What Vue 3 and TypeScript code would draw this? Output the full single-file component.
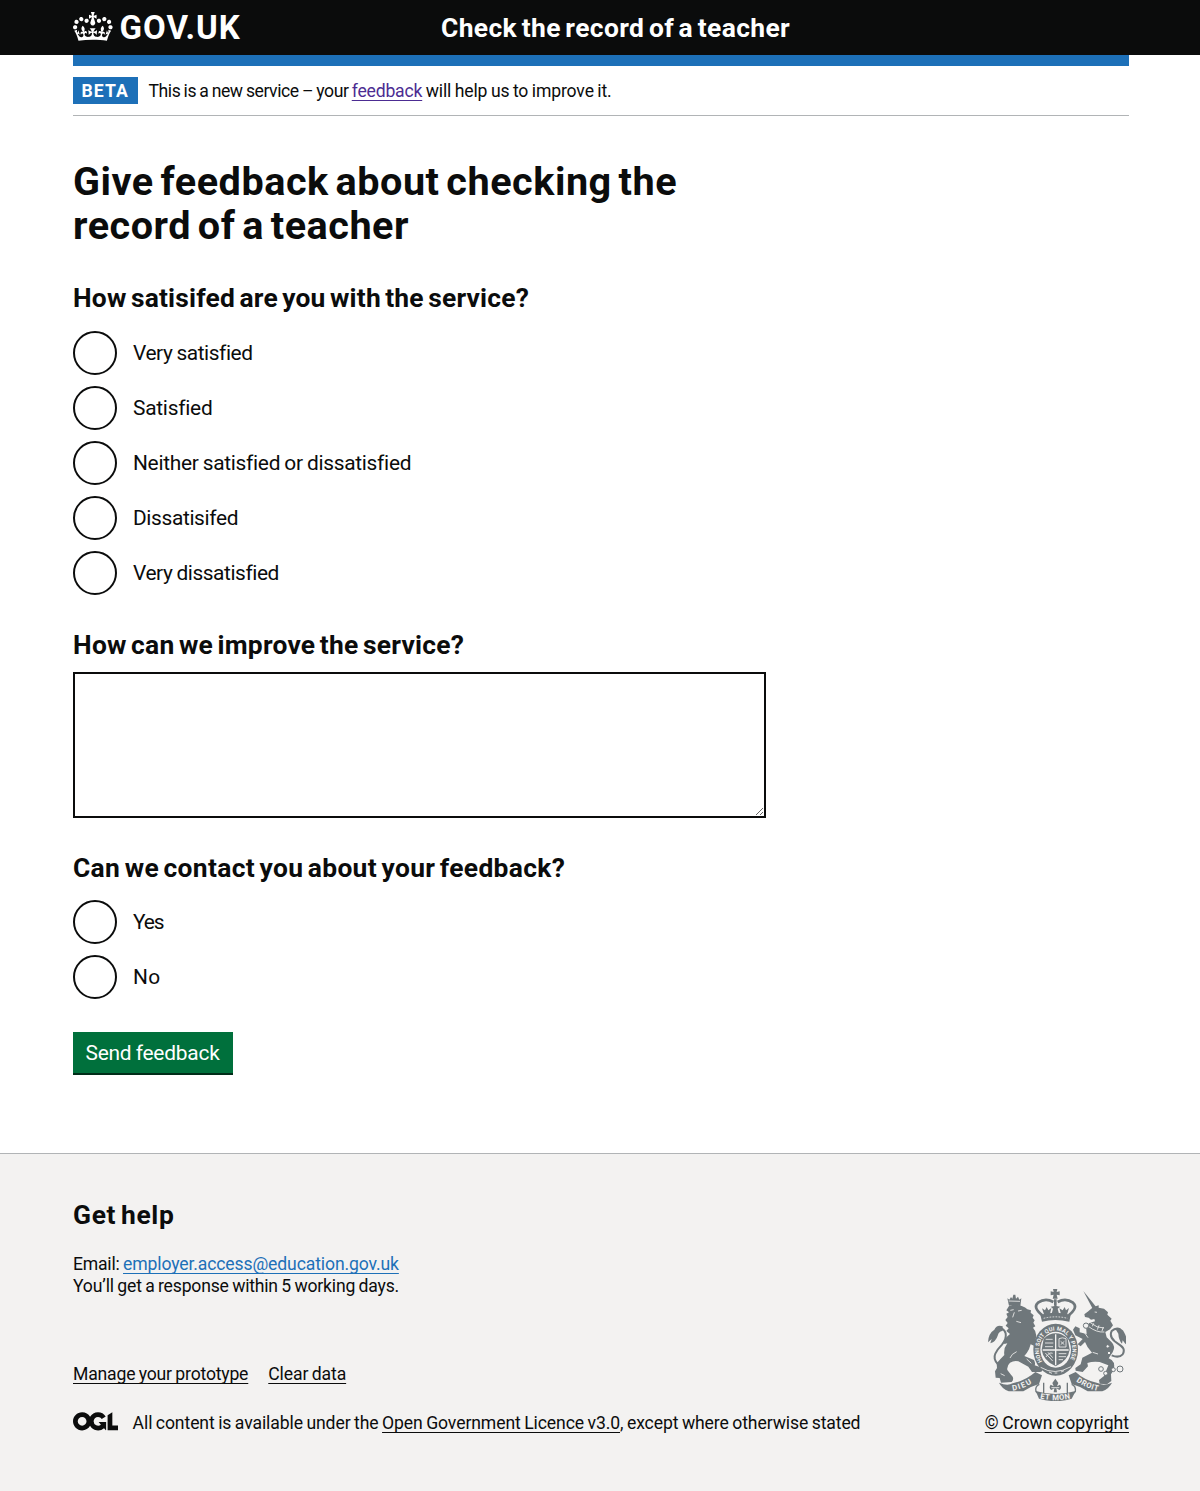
<script setup lang="ts">
import { ref } from 'vue'

interface Option {
  value: string
  label: string
  tracking: number
}

const satisfactionOptions: Option[] = [
  { value: 'very-satisfied', label: 'Very satisfied', tracking: -0.43 },
  { value: 'satisfied', label: 'Satisfied', tracking: -0.25 },
  { value: 'neither', label: 'Neither satisfied or dissatisfied', tracking: -0.29 },
  { value: 'dissatisfied', label: 'Dissatisifed', tracking: -0.36 },
  { value: 'very-dissatisfied', label: 'Very dissatisfied', tracking: -0.43 },
]

const contactOptions: Option[] = [
  { value: 'yes', label: 'Yes', tracking: -1.1 },
  { value: 'no', label: 'No', tracking: 0.4 },
]

const satisfaction = ref('')
const improvement = ref('')
const contact = ref('')
</script>

<template>
  <div class="page">
    <header class="header">
      <div class="container header-inner">
        <a class="logo" href="#" aria-label="GOV.UK">
          <svg class="logo-crown" viewBox="0 0 132 97" aria-hidden="true">
            <path fill="currentColor" fill-rule="evenodd" d="M25 30.2c3.5 1.5 7.7-.2 9.1-3.7 1.5-3.6-.2-7.8-3.9-9.2-3.6-1.4-7.6.3-9.1 3.9-1.4 3.5.3 7.5 3.9 9zM9 39.5c3.6 1.5 7.8-.2 9.2-3.7 1.5-3.6-.2-7.8-3.9-9.1-3.6-1.5-7.6.2-9.1 3.8-1.4 3.5.3 7.5 3.8 9zM4.4 57.2c3.5 1.5 7.7-.2 9.1-3.8 1.5-3.6-.2-7.7-3.9-9.1-3.5-1.5-7.6.3-9.1 3.8-1.4 3.5.3 7.6 3.9 9.1zm38.3-21.4c3.5 1.5 7.7-.2 9.1-3.8 1.5-3.6-.2-7.7-3.9-9.1-3.6-1.5-7.6.3-9.1 3.8-1.3 3.6.4 7.7 3.9 9.1zm64.4-5.6c-3.6 1.5-7.8-.2-9.1-3.7-1.5-3.6.2-7.8 3.8-9.2 3.6-1.4 7.7.3 9.2 3.9 1.3 3.5-.4 7.5-3.9 9zm15.9 9.3c-3.6 1.5-7.7-.2-9.1-3.7-1.5-3.6.2-7.8 3.7-9.1 3.6-1.5 7.7.2 9.2 3.8 1.5 3.5-.3 7.5-3.8 9zm4.7 17.7c-3.6 1.5-7.8-.2-9.2-3.8-1.5-3.6.2-7.7 3.9-9.1 3.6-1.5 7.7.3 9.2 3.8 1.3 3.5-.4 7.6-3.9 9.1zM89.3 35.8c-3.6 1.5-7.8-.2-9.2-3.8-1.4-3.6.2-7.7 3.9-9.1 3.6-1.5 7.7.3 9.2 3.8 1.4 3.6-.3 7.7-3.9 9.1zM69.7 17.7l8.9 4.7V9.3l-8.9 2.8c-.2-.3-.5-.6-.9-.9L72.4 0H59.6l3.5 11.2c-.3.3-.6.5-.9.9l-8.8-2.8v13.1l8.8-4.7c.3.3.6.7.9.9l-5 15.4v.1c-.2.8-.4 1.6-.4 2.4 0 4.1 3.1 7.5 7 8.1h.2c.3 0 .7.1 1 .1.4 0 .7 0 1-.1h.2c4-.6 7.1-4.1 7.1-8.1 0-.8-.1-1.7-.4-2.4V34l-5.1-15.4c.4-.2.7-.6 1-.9zM66 92.8c16.9 0 32.8 1.1 47.1 3.2 4-16.9 8.9-26.7 14-33.5l-9.6-3.4c1 4.9 1.1 7.2 0 10.2-1.5-1.4-3-4.3-4.2-8.7L108.6 76c2.8-2 5-3.2 7.5-3.3-4.4 9.4-10 11.9-13.6 11.2-4.3-.8-6.3-4.6-5.6-7.9 1-4.7 5.7-5.9 8-.5 4.3-8.7-3-11.4-7.6-8.8 7.1-7.2 7.9-13.5 2.1-21.1-8 6.1-8.1 12.3-4.5 20.8-4.7-5.4-12.1-2.5-9.5 6.2 3.4-5.2 7.9-2 7.2 3.1-.6 4.3-6.4 7.8-13.5 7.2-10.3-.9-10.9-8-11.2-13.8 2.5-.5 7.1 1.8 11 7.3L80.2 60c-4.1 4.4-8 5.3-12.3 5.4 1.4-4.4 8-11.6 8-11.6H55.5s6.4 7.2 7.9 11.6c-4.2-.1-8-1-12.3-5.4l1.4 16.4c3.9-5.5 8.5-7.7 10.9-7.3-.3 5.8-.9 12.8-11.1 13.8-7.2.6-12.9-2.9-13.5-7.2-.7-5 3.8-8.3 7.1-3.1 2.7-8.7-4.6-11.6-9.4-6.2 3.7-8.5 3.6-14.7-4.6-20.8-5.8 7.6-5 13.9 2.2 21.1-4.7-2.6-11.9.1-7.7 8.8 2.3-5.5 7.1-4.2 8.1.5.7 3.3-1.3 7.1-5.7 7.9-3.5.7-9-1.8-13.5-11.2 2.5.1 4.7 1.3 7.5 3.3l-4.7-15.4c-1.2 4.4-2.7 7.2-4.3 8.7-1.1-3-.9-5.3 0-10.2l-9.5 3.4c5 6.9 9.9 16.7 14 33.5 14.8-2.1 30.8-3.2 47.7-3.2z" />
          </svg>
          <span class="logo-text">GOV.UK</span>
        </a>
        <a class="service-name" href="#">Check the record of a teacher</a>
      </div>
    </header>

    <div class="container">
      <div class="phase-banner">
        <strong class="tag">BETA</strong>
        <p class="phase-text"><span class="phase-lead">This is a new service – your </span><a class="link-visited" href="#">feedback</a><span class="phase-tail"> will help us to improve it.</span></p>
      </div>

      <main class="main">
        <form @submit.prevent>
          <h1 class="title">Give feedback about checking the record of a teacher</h1>

          <fieldset class="group">
            <legend class="heading q-satisfied">How satisifed are you with the service?</legend>
            <div class="radios">
              <label v-for="option in satisfactionOptions" :key="option.value" class="radio">
                <input v-model="satisfaction" type="radio" name="satisfaction" :value="option.value">
                <span class="radio-text" :style="{ letterSpacing: option.tracking + 'px' }">{{ option.label }}</span>
              </label>
            </div>
          </fieldset>

          <div class="group">
            <label class="heading q-improve" for="improve">How can we improve the service?</label>
            <textarea id="improve" v-model="improvement" class="textarea" rows="5"></textarea>
          </div>

          <fieldset class="group">
            <legend class="heading q-contact">Can we contact you about your feedback?</legend>
            <div class="radios radios-contact">
              <label v-for="option in contactOptions" :key="option.value" class="radio">
                <input v-model="contact" type="radio" name="contact" :value="option.value">
                <span class="radio-text" :style="{ letterSpacing: option.tracking + 'px' }">{{ option.label }}</span>
              </label>
            </div>
          </fieldset>

          <button class="button" type="submit">Send feedback</button>
        </form>
      </main>
    </div>

    <footer class="footer">
      <div class="container footer-inner">
        <div class="footer-main">
          <h2 class="heading footer-heading">Get help</h2>
          <p class="footer-text"><span class="t-email">Email: </span><a class="link" href="#">employer.access@education.gov.uk</a></p>
          <p class="footer-text t-response">You’ll get a response within 5 working days.</p>
          <ul class="footer-links">
            <li><a class="footer-link t-manage" href="#">Manage your prototype</a></li>
            <li><a class="footer-link t-clear" href="#">Clear data</a></li>
          </ul>
          <div class="licence">
            <svg class="ogl" viewBox="0 0 483.2 195.7" aria-hidden="true">
              <path fill="currentColor" d="M421.5 142.8V.1l-50.7 32.3v161.1h112.4v-50.7zm-122.3-9.6A47.12 47.12 0 0 1 221 97.8c0-26 21.1-47.1 47.1-47.1 16.7 0 31.4 8.7 39.7 21.8l42.7-27.2A97.63 97.63 0 0 0 268.1 0c-36.5 0-68.3 20.1-85.1 49.7A98 98 0 0 0 97.8 0C43.9 0 0 43.9 0 97.8s43.9 97.8 97.8 97.8c36.5 0 68.3-20.1 85.1-49.7a97.76 97.76 0 0 0 149.6 25.4l19.4 22.2h3v-87.8h-80l24.3 27.5zM97.8 145c-26 0-47.1-21.1-47.1-47.1s21.1-47.1 47.1-47.1 47.1 21.1 47.1 47.1S123.8 145 97.8 145" />
            </svg>
            <p class="footer-text t-licence">All content is available under the <a class="footer-link" href="#">Open Government Licence v3.0</a>, except where otherwise stated</p>
          </div>
        </div>

        <div class="footer-crest">
          <svg class="crest" viewBox="54 27 414 336" aria-hidden="true">
            <defs>
              <path id="motto" d="M219 247A50 58 0 1 1 295 247" />
              <path id="ribbonLeft" d="M128 332Q163 327 200 300" />
              <path id="ribbonMid" d="M204 354Q257 367 309 354" />
              <path id="ribbonRight" d="M312 299Q347 327 392 334" />
            </defs>

            <!-- Lion -->
            <g class="ink">
              <path d="M112 55l6 4 5-8 4 5 3-12h6l2 12 6-6 4 9 6-4-3 24q-18-7-34-2z" />
              <path d="M117 78Q137 70 157 79Q166 82 172 88L183 91L182 98L191 106L188 113L194 121L190 128L196 139L189 143Q203 158 197 178L211 189Q216 201 205 203L182 193L177 208Q171 220 163 228L192 240Q197 250 194 256L216 263Q220 275 210 276L186 276L175 260L145 244Q132 241 120 248Q110 257 112 270L123 284Q135 295 125 306L93 308L89 294L77 293L75 274L81 264L80 250Q89 239 103 225Q100 205 112 190L103 192L100 184Q110 169 120 162L109 153L116 145L107 137L113 129L106 120L113 111L109 101L117 97L109 91Z" />
              <path class="line thick" d="M85 254Q68 238 76 221Q83 207 96 194Q110 177 107 160Q102 144 86 145" />
              <path d="M98 139Q80 133 73 149Q55 160 54 187L65 177L61 190Q78 184 83 167Q87 153 98 153Z" />
            </g>
            <path class="cut" d="M116 63L150 64M121 91l10-2M144 93l11-2M133 97l-5 15M139 124l14 4M140 215Q124 222 120 234M184 250l-14-13M92 281l12 6" />

            <!-- Unicorn -->
            <g class="ink">
              <path d="M340 33L378 80L368 86Z" />
              <path d="M353 95L370 81L386 76L386 83L402 86L414 97L412 104L425 116L421 122L429 136L420 148L406 156L410 172L425 187Q438 200 428 217L416 235Q438 243 431 270L423 283L424 303L411 313L389 311L387 300L402 288L415 256L389 246Q369 243 352 249L354 259L338 276L317 272L316 264L332 253L337 233L366 218Q351 203 345 186L332 199L323 193L338 177L316 166L309 149L316 139L329 145L329 157L350 162L348 139L358 129L375 124L373 117L363 119L356 113L345 111L343 103Z" />
              <path class="line thick" d="M425 226Q447 235 458 223Q467 208 452 197L434 184Q417 169 425 153Q437 142 451 148" />
              <path d="M435 145Q455 141 463 158Q473 175 467 193L458 181L456 191Q446 180 445 161Z" />
            </g>
            <path class="cut" d="M374 96l7 1M355 139q24 19 48 17M361 128q20 17 41 16M367 139l4-9M382 149l5-13M396 153l4-12M368 217l16 5M340 153l14 20" />
            <g class="chain">
              <circle cx="348" cy="137" r="8" />
              <circle cx="393" cy="267" r="7" />
              <circle cx="407" cy="280" r="6" />
              <circle cx="430" cy="269" r="6" />
              <circle cx="450" cy="267" r="9" />
              <circle cx="413" cy="199" r="5" />
              <circle cx="417" cy="219" r="5" />
            </g>

            <!-- Crown -->
            <g class="ink">
              <path d="M249 27h13l-2 9 9-2v12l-9-2 3 12h-15l3-12-9 2V34l9 2z" />
              <path d="M211 104Q255 93 302 104L298 125Q255 115 216 125Z" />
              <path d="M222 103L216 85L225 91L230 81L235 91L244 84L240 102ZM245 101L249 86L242 80L254 78L256 70L259 78L271 80L263 86L267 101ZM273 102L268 85L278 91L284 81L288 91L297 84L291 104Z" />
              <path class="line arch" d="M217 106Q187 82 204 68Q226 52 250 66M296 106Q326 82 309 68Q287 52 263 66M256 58V77" />
            </g>
            <path class="cut" d="M221 115Q256 106 293 115" stroke-dasharray="5 4" />

            <!-- Garter and shield -->
            <ellipse class="ink" cx="257" cy="209" rx="67" ry="78" />
            <ellipse class="paper" cx="257" cy="209" rx="46" ry="54" />
            <path class="ink" d="M221 176Q257 144 293 176L299 209Q295 241 257 259Q219 241 215 209Z" />
            <path class="cut shield" d="M257 163V256M218 210H296" />
            <path class="cut" d="M227 178h21M225 189h25M225 200h24M267 176q10-5 21 0v25h-21zM272 184l11 10M283 184l-11 10M226 219l22 24M234 217l14 16M228 231q10-16 20-11M266 221h23M266 230h22M266 239h13" />
            <text class="motto"><textPath href="#motto" startOffset="3" textLength="236">HONI SOIT QUI MAL Y PENSE</textPath></text>
            <path class="cut" d="M212 262Q254 288 303 260M237 276l9 4M254 279h8M273 276l9-4" />

            <!-- Ribbons -->
            <g class="ink">
              <path d="M87 308Q112 319 128 310Q168 301 196 276L216 286L207 312Q182 319 160 334H116Q95 325 87 308Z" />
              <path d="M426 308Q401 319 385 310Q343 301 317 276L296 286L305 312Q331 319 353 334H397Q418 325 426 308Z" />
              <path d="M197 333Q256 351 317 333L305 356Q257 371 207 356Z" />
              <path class="line ribbon" d="M208 313Q194 319 198 335Q207 347 221 341V308M305 313Q319 319 316 335Q307 347 292 341V308" />
              <path d="M251 337L253 325L244 330Q235 324 242 314L251 319L247 309L256 296L265 309L261 319L270 314Q277 324 268 330L259 325L261 337Z" />
            </g>
            <path class="cut" d="M244 323h24" />
            <text class="ribbon-text"><textPath href="#ribbonLeft" startOffset="0" textLength="62">DIEU</textPath></text>
            <text class="ribbon-text"><textPath href="#ribbonMid" startOffset="6" textLength="92">ET MON</textPath></text>
            <text class="ribbon-text"><textPath href="#ribbonRight" startOffset="8" textLength="72">DROIT</textPath></text>
          </svg>
          <a class="footer-link t-crown" href="#">© Crown copyright</a>
        </div>
      </div>
    </footer>
  </div>
</template>

<style>
body {
  margin: 0;
  background: #f3f2f1;
}
</style>

<style scoped>
.page {
  display: flex;
  flex-direction: column;
  min-height: 1491px;
  background: #fff;
  color: #0b0c0c;
  font-family: Roboto, "Liberation Sans", sans-serif;
  font-size: 17.6px;
  line-height: 22px;
  word-spacing: -0.7px;
}

.container {
  width: 1056px;
  margin-left: 73px;
}

p, h1, h2, ul, fieldset {
  margin: 0;
  padding: 0;
}

.header {
  height: 55px;
  background: #0b0c0c;
}

.header-inner {
  display: flex;
  align-items: flex-start;
  height: 55px;
  border-bottom: 11px solid #1d70b8;
}

.logo {
  display: flex;
  width: 368px;
  padding-top: 12px;
  color: #fff;
  text-decoration: none;
}

.logo-crown {
  width: 39.6px;
  height: 29.1px;
}

.logo-text {
  margin: 1px 0 0 7px;
  font-size: 33px;
  font-weight: 700;
  line-height: 30px;
  letter-spacing: 1px;
}

.service-name {
  padding-top: 12px;
  color: #fff;
  font-size: 26.4px;
  font-weight: 700;
  line-height: 33px;
  letter-spacing: 0.39px;
  word-spacing: -0.09em;
  text-decoration: none;
}

.phase-banner {
  display: flex;
  align-items: center;
  margin-top: 11px;
  padding: 11px 0;
  height: 27px;
  border-bottom: 1px solid #b1b4b6;
}

.tag {
  box-sizing: border-box;
  width: 65px;
  height: 27px;
  margin-right: 10.5px;
  padding-left: 8.5px;
  background: #1d70b8;
  color: #fff;
  font-weight: 700;
  line-height: 28px;
  letter-spacing: 1.1px;
}

.phase-text {
  padding-top: 1px;
  white-space: pre;
}

.phase-lead {
  letter-spacing: -0.43px;
}

.phase-tail {
  letter-spacing: -0.14px;
}

.link,
.link-visited,
.footer-link {
  text-decoration: underline;
  text-decoration-thickness: 1px;
  text-underline-offset: 3px;
  text-decoration-skip-ink: none;
}

.link-visited {
  color: #4c2c92;
  letter-spacing: -0.2px;
}

.link {
  color: #1d70b8;
  letter-spacing: -0.13px;
}

.footer-link {
  color: #0b0c0c;
}

.main {
  width: 693px;
  padding: 44px 0 80px;
}

.title {
  margin-bottom: 33px;
  font-size: 39.6px;
  font-weight: 700;
  line-height: 44px;
  letter-spacing: 0.53px;
  word-spacing: -0.09em;
}

.group {
  display: block;
  min-width: 0;
  margin-bottom: 33px;
  border: 0;
}

.heading {
  display: block;
  padding: 1px 0 0;
  font-size: 26.4px;
  font-weight: 700;
  line-height: 33px;
  word-spacing: -0.09em;
}

.q-satisfied {
  letter-spacing: 0.2px;
}

.q-improve {
  margin-bottom: 10px;
  letter-spacing: 0.25px;
}

.q-contact {
  letter-spacing: 0.33px;
}

.radios {
  display: flex;
  flex-direction: column;
  gap: 11px;
  padding-top: 16px;
}

.radios-contact {
  padding-top: 15px;
}

.radio {
  display: flex;
  align-items: center;
  gap: 16px;
  height: 44px;
  font-size: 20.9px;
  line-height: 27px;
}

.radio-text {
  padding-top: 1px;
}

.radio input {
  appearance: none;
  box-sizing: border-box;
  width: 44px;
  height: 44px;
  margin: 0;
  border: 2px solid #0b0c0c;
  border-radius: 50%;
  background: #fff;
}

.textarea {
  display: block;
  box-sizing: border-box;
  width: 693px;
  height: 146px;
  padding: 5px;
  border: 2px solid #0b0c0c;
  border-radius: 0;
  font: inherit;
  resize: vertical;
}

.button {
  display: block;
  width: 160px;
  height: 41px;
  padding: 2px 1px 0 0;
  border: 0;
  background: #00703c;
  box-shadow: 0 2px 0 #002d18;
  color: #fff;
  font-family: inherit;
  font-size: 20.9px;
  line-height: 39px;
  letter-spacing: -0.22px;
  word-spacing: inherit;
}

.footer {
  flex: 1;
  border-top: 1px solid #b1b4b6;
  background: #f3f2f1;
}

.footer-inner {
  display: flex;
  justify-content: space-between;
  align-items: flex-end;
  padding-top: 44px;
}

.footer-heading {
  margin-bottom: 21px;
  letter-spacing: 0.65px;
}

.t-email {
  letter-spacing: -0.21px;
}

.t-response {
  letter-spacing: -0.2px;
}

.footer-links {
  display: flex;
  gap: 20px;
  margin: 66px 0 27px;
  list-style: none;
}

.t-manage {
  letter-spacing: -0.19px;
}

.t-clear {
  letter-spacing: -0.12px;
}

.licence {
  display: flex;
  gap: 14.5px;
}

.ogl {
  width: 45.1px;
  height: 18.7px;
}

.t-licence {
  letter-spacing: -0.11px;
}

.footer-crest {
  display: flex;
  flex-direction: column;
  align-items: center;
}

.crest {
  width: 138px;
  height: 112px;
  margin: 0 0 11px 1px;
}

.t-crown {
  letter-spacing: 0;
}

.ink {
  fill: #6f777b;
}

.line {
  fill: none;
  stroke: #6f777b;
}

.thick {
  stroke-width: 6;
}

.arch {
  stroke-width: 8;
}

.ribbon {
  stroke-width: 4;
}

.paper {
  fill: #f3f2f1;
}

.cut {
  fill: none;
  stroke: #f3f2f1;
  stroke-width: 2.5;
}

.shield {
  stroke-width: 4;
}

.chain {
  fill: #f3f2f1;
  stroke: #6f777b;
  stroke-width: 3;
}

.motto,
.ribbon-text {
  fill: #f3f2f1;
  font-size: 17px;
  font-weight: 700;
  word-spacing: 0;
}

.ribbon-text {
  font-size: 23px;
}
</style>
